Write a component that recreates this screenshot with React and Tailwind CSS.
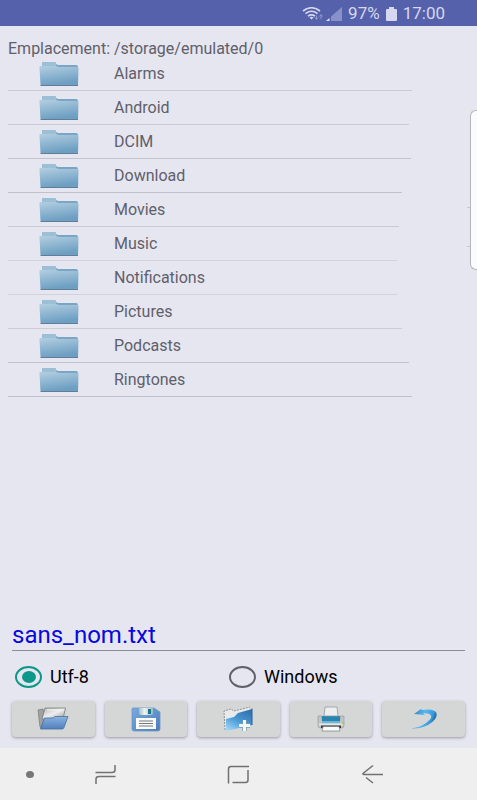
import { useState } from "react";

const folders = [
  { name: "Alarms", line: "w-[404px] border-[#cbcbd7]" },
  { name: "Android", line: "w-[401px] border-[#cbcbd7]" },
  { name: "DCIM", line: "w-[403px] border-[#c3c3cf]" },
  { name: "Download", line: "w-[394px] border-[#c0c0cb]" },
  { name: "Movies", line: "w-[391px] border-[#cbcbd7]" },
  { name: "Music", line: "w-[389px] border-[#d2d2dd]" },
  { name: "Notifications", line: "w-[389px] border-[#d2d2dd]" },
  { name: "Pictures", line: "w-[394px] border-[#cdcdd8]" },
  { name: "Podcasts", line: "w-[401px] border-[#c3c3cf]" },
  { name: "Ringtones", line: "w-[404px] border-[#bfbfca]" },
];

function StatusBar() {
  return (
    <header className="flex h-[26px] items-center justify-end bg-[#5661ab] pt-0.5 pr-8 text-[#d5d8f0]">
      <svg width="22" height="15" viewBox="0 0 22 15" fill="none" stroke="currentColor">
        <path d="M1 4Q9.500 -2.500 18 4" strokeWidth="1.600" />
        <path d="M3.500 6.600Q9.500 2 15.500 6.600" strokeWidth="1.600" />
        <path d="M6 9.200Q9.500 6.600 13 9.200" strokeWidth="1.600" />
        <path d="M7.500 10.500Q9.500 9 11.500 10.500L9.500 12.500Z" fill="currentColor" stroke="none" />
        <path d="M14.500 8.500V12M13 10.500L14.500 12.500L16 10.500M19 12V8M17.500 9.500L19 7.500L20.500 9.500" stroke="#8f98cb" />
      </svg>
      <svg className="ml-0.5" width="16" height="14" viewBox="0 0 16 14">
        <path d="M5 9.600L16 0V14H5Z" fill="#8992c8" />
        <path d="M0 14L3.500 11V14Z" fill="#e6e8f7" />
      </svg>
      <span className="ml-1.5 text-[17px]">97%</span>
      <svg className="ml-1.5" width="11" height="14" viewBox="0 0 11 14" fill="currentColor">
        <path d="M3 0H8V2H10Q11 2 11 3V13Q11 14 10 14H1Q0 14 0 13V3Q0 2 1 2H3Z" />
      </svg>
      <span className="ml-1.5 text-[17px]">17:00</span>
    </header>
  );
}

function FolderIcon() {
  return (
    <svg width="40" height="26" viewBox="0 0 40 26" aria-hidden="true">
      <path d="M3 5V2Q3 1 4 1H15Q17 1 17 3L19 4H37Q39 4 39 6V8H1V5Z" fill="#79a6c5" />
      <path d="M4 1H15Q17 1 17 3V5H3V2Q3 1 4 1Z" fill="#9dbfd6" />
      <path d="M1 5H17L20 6H38.500Q40 6 39.500 8L39 24H1.500L0.500 7Q0.300 5 1 5Z" fill="url(#folderFace)" />
      <path d="M1.500 24.500H39" stroke="#607f96" />
      <defs>
        <linearGradient id="folderFace" x1="0" y1="0" x2="0.3" y2="1">
          <stop offset="0" stopColor="#b3cfe1" />
          <stop offset="1" stopColor="#6d9fc2" />
        </linearGradient>
      </defs>
    </svg>
  );
}

function OpenIcon() {
  return (
    <svg width="32" height="24" viewBox="0 0 32 24">
      <path d="M1 3L6 2L8 10L4 21L3 20Z" fill="#a0a1a3" stroke="#77787a" strokeWidth="0.700" />
      <path d="M8 1H28.500L26 12H5Z" fill="url(#openBack)" stroke="#77787a" strokeWidth="0.800" />
      <path d="M10 3H26" stroke="#f4f4f4" />
      <path d="M7.500 11H16L18 9.500H31L27 20.500Q26.500 22 25 22H3.500Z" fill="url(#openFace)" stroke="#42709f" strokeWidth="0.800" />
      <defs>
        <linearGradient id="openBack" x1="0" y1="0" x2="1" y2="1">
          <stop offset="0" stopColor="#b5b6b7" />
          <stop offset="0.5" stopColor="#eeeeee" />
          <stop offset="1" stopColor="#949596" />
        </linearGradient>
        <linearGradient id="openFace" x1="0" y1="0" x2="0" y2="1">
          <stop offset="0" stopColor="#8ab3e0" />
          <stop offset="1" stopColor="#527fbd" />
        </linearGradient>
      </defs>
    </svg>
  );
}

function SaveIcon() {
  return (
    <svg width="30" height="25" viewBox="0 0 30 25">
      <path d="M2 1H23L29 5V22Q29 24 27 24H3Q1 24 1 22V2Q1 1 2 1Z" fill="url(#saveFace)" stroke="#6b98cb" strokeWidth="0.800" />
      <path d="M8 1H22V6Q22 8 20 8H10Q8 8 8 6Z" fill="url(#shutter)" />
      <path d="M17 2H20V7H17Z" fill="#18758e" />
      <path d="M5 11H25V22H5Z" fill="#fafbfb" />
      <path d="M8 14H22M8 16.500H22M8 19H22" stroke="#77797b" strokeWidth="1.200" />
      <defs>
        <linearGradient id="saveFace" x1="0" y1="0" x2="1" y2="1">
          <stop offset="0" stopColor="#78a9e0" />
          <stop offset="1" stopColor="#4b7dbb" />
        </linearGradient>
        <linearGradient id="shutter">
          <stop offset="0" stopColor="#9fbec8" />
          <stop offset="0.4" stopColor="#f1f3e9" />
          <stop offset="1" stopColor="#9bbac4" />
        </linearGradient>
      </defs>
    </svg>
  );
}

function NewFolderIcon() {
  return (
    <svg width="30" height="26" viewBox="0 0 30 26">
      <path d="M1 5L8 3L11 5L27 1V4L6 23L2 24Z" fill="#e8eaeb" />
      <path d="M2 24L1 5L8 3L11 5L27 1" fill="none" stroke="#85898c" strokeWidth="0.900" strokeDasharray="2 1" />
      <path d="M3 13L11 11L15 7L29 3V19L3 25Z" fill="url(#newFace)" />
      <path d="M29 2.500V19" stroke="#285f92" />
      <path d="M21.500 14V25M16 19.500H27" stroke="#7899b3" strokeWidth="4.400" />
      <path d="M21.500 14V25M16 19.500H27" stroke="#f4f7f8" strokeWidth="3" />
      <defs>
        <linearGradient id="newFace" x1="0.1" y1="1" x2="0.7" y2="0">
          <stop offset="0" stopColor="#a5d9f8" />
          <stop offset="0.5" stopColor="#4b9bd6" />
          <stop offset="1" stopColor="#3373b0" />
        </linearGradient>
      </defs>
    </svg>
  );
}

function PrintIcon() {
  return (
    <svg width="28" height="26" viewBox="0 0 28 26">
      <path d="M1 10H5V14H23V10H27V19Q27 22 25 22H3Q1 22 1 19Z" fill="#c0c4c6" stroke="#999da0" strokeWidth="0.700" />
      <path d="M5 10H23V16H5Z" fill="#2584b0" />
      <path d="M8 1H20L21 10H7Z" fill="#eceef0" stroke="#96999c" strokeWidth="0.800" />
      <path d="M5 15H23V17H5Z" fill="#67b8d7" />
      <path d="M2 17.500H26V19.500H2Z" fill="#e5e7e8" />
      <path d="M4 19.500H24V22H4Z" fill="#333537" />
      <path d="M6 20.500H22L23 25H5Z" fill="#fafafa" stroke="#77797b" strokeWidth="0.700" />
      <path d="M25 17.500H26.500" stroke="#a2c836" strokeWidth="1.500" />
    </svg>
  );
}

function BackIcon() {
  return (
    <svg width="28" height="22" viewBox="0 0 28 22">
      <path d="M4 6L11 1L12 2Q24 0 26.500 5Q28 11 18 17Q10 21 1 20.500Q10 19.500 16 15Q24 9 20 6.500Q18 5 13 5L15 7Z" fill="url(#backFace)" />
      <defs>
        <linearGradient id="backFace" x1="0" y1="0.2" x2="1" y2="0.5">
          <stop offset="0" stopColor="#2c7dbf" />
          <stop offset="0.5" stopColor="#55b9f0" />
          <stop offset="0.8" stopColor="#3b9bdc" />
          <stop offset="1" stopColor="#14558d" />
        </linearGradient>
      </defs>
    </svg>
  );
}

const actions = [
  { label: "Ouvrir", Icon: OpenIcon },
  { label: "Enregistrer", Icon: SaveIcon },
  { label: "Nouveau dossier", Icon: NewFolderIcon },
  { label: "Imprimer", Icon: PrintIcon },
  { label: "Retour", Icon: BackIcon },
];

function EncodingOption({ label, value, selected, onSelect }) {
  return (
    <label className="flex items-center gap-2 text-lg leading-6 text-black">
      <input
        type="radio"
        name="encoding"
        value={value}
        checked={selected === value}
        onChange={() => onSelect(value)}
        className="grid h-[22px] w-[27px] appearance-none place-content-center rounded-[50%] border-2 border-[#626168] before:h-3 before:w-3.5 before:rounded-[50%] checked:border-[#0b9888] checked:before:bg-[#0b9888]"
      />
      {label}
    </label>
  );
}

function NavigationBar() {
  return (
    <nav className="flex h-[52px] items-center bg-[#efefef] pl-[26px] text-[#717171]">
      <button aria-label="Masquer" className="h-[7px] w-2 rounded-[50%] bg-[#777777]" />
      <button aria-label="Applications récentes" className="ml-[60px]">
        <svg width="23" height="21" viewBox="0 0 23 21" fill="none" stroke="currentColor" strokeWidth="1.500">
          <path d="M1.500 8.500H18Q21 8.500 21 6V1" />
          <path d="M21.500 12.500H5Q2 12.500 2 15V20" />
        </svg>
      </button>
      <button aria-label="Accueil" className="ml-[110px]">
        <svg width="23" height="21" viewBox="0 0 23 21" fill="none" stroke="currentColor" strokeWidth="1.500">
          <path d="M22 2.500H4Q1.500 2.500 1.500 5V19.500" />
          <path d="M21 6V16Q21 18.500 18.500 18.500H5.500" />
        </svg>
      </button>
      <button aria-label="Précédent" className="ml-[111px]">
        <svg width="23" height="21" viewBox="0 0 23 21" fill="none" stroke="currentColor" strokeWidth="1.500">
          <path d="M12 1.500L2 9.500Q1.500 10.500 3 10.500H22" />
          <path d="M5 13.500L12 19" />
        </svg>
      </button>
    </nav>
  );
}

function App() {
  const [filename, setFilename] = useState("sans_nom.txt");
  const [encoding, setEncoding] = useState("utf-8");

  return (
    <div className="relative flex min-h-screen flex-col overflow-hidden bg-[#e6e6f1] font-['Roboto',sans-serif]">
      <StatusBar />
      <main className="flex flex-1 flex-col">
        <h1 className="mt-[13px] pl-2 text-base leading-5 text-[#606069]">
          Emplacement: /storage/emulated/0
        </h1>
        <ul className="-mt-0.5 pr-2 pl-2">
          {folders.map((f) => (
            <li key={f.name} className={`max-w-full border-b ${f.line}`}>
              <button className="flex h-[33px] w-full items-center pl-[31px] text-left text-base text-[#606069]">
                <FolderIcon />
                <span className="ml-[35px]">{f.name}</span>
              </button>
            </li>
          ))}
        </ul>
        <div className="mt-auto px-3 pb-[11px]">
          <input
            aria-label="Nom du fichier"
            value={filename}
            onChange={(e) => setFilename(e.target.value)}
            className="h-8 w-full border-b border-[#8d8d97] text-2xl leading-7 text-[#0808df] outline-none"
          />
          <div className="mt-[14px] grid grid-cols-[214px_1fr] pl-[3px]">
            <EncodingOption label="Utf-8" value="utf-8" selected={encoding} onSelect={setEncoding} />
            <EncodingOption label="Windows" value="windows" selected={encoding} onSelect={setEncoding} />
          </div>
          <div className="mt-3 grid grid-cols-5 gap-2.5">
            {actions.map(({ label, Icon }) => (
              <button
                key={label}
                aria-label={label}
                className="flex h-9 items-center justify-center rounded-sm bg-[#d5d7d7] shadow-[0_1px_3px_#9999a5]"
              >
                <Icon />
              </button>
            ))}
          </div>
        </div>
      </main>
      <NavigationBar />
      {/* edge panel handle */}
      <div className="absolute top-[110px] right-0 h-40 w-[7px] rounded-l-md border border-r-0 border-[#b5b5bc] bg-[#fafbfc]" />
      <div className="absolute top-[207px] right-[7px] h-10 w-[3px] border-y border-[#c9c9d2]" />
    </div>
  );
}

export default App;
